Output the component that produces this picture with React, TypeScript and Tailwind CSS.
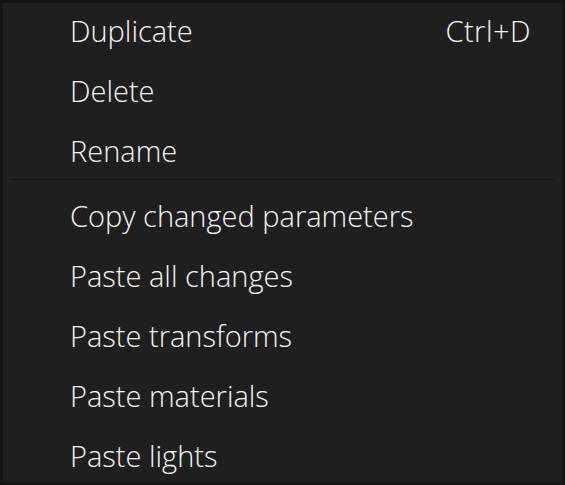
const top = [
  { label: "Duplicate", shortcut: "Ctrl+D" },
  { label: "Delete" },
  { label: "Rename" },
];

const bottom = [
  { label: "Copy changed parameters" },
  { label: "Paste all changes" },
  { label: "Paste transforms" },
  { label: "Paste materials" },
  { label: "Paste lights" },
];

type Item = { label: string; shortcut?: string };

function Row({ item }: { item: Item }) {
  return (
    <div className="flex h-[60px] shrink-0 items-center justify-between pl-[67px] pr-[31px]">
      <span>{item.label}</span>
      {item.shortcut ? <span className="tracking-[0.5px]">{item.shortcut}</span> : null}
    </div>
  );
}

export default function App() {
  return (
    <div
      className="h-[485px] w-[565px] border-[3px] border-[#151515] text-[29px] font-light text-[#f6f6f6]"
      style={{ fontFamily: '"Open Sans", "Noto Sans", sans-serif' }}
    >
      <div className="h-full overflow-hidden bg-[#1f1f1f]">
        <div className="-mt-[2px] flex flex-col">
          {top.map((item) => (
            <Row key={item.label} item={item} />
          ))}
        </div>
        <div className="-mt-[2px] ml-[8px] mr-[8px] h-px bg-[#141414]" />
        <div className="mt-[6px] flex flex-col">
          {bottom.map((item) => (
            <Row key={item.label} item={item} />
          ))}
        </div>
      </div>
    </div>
  );
}
